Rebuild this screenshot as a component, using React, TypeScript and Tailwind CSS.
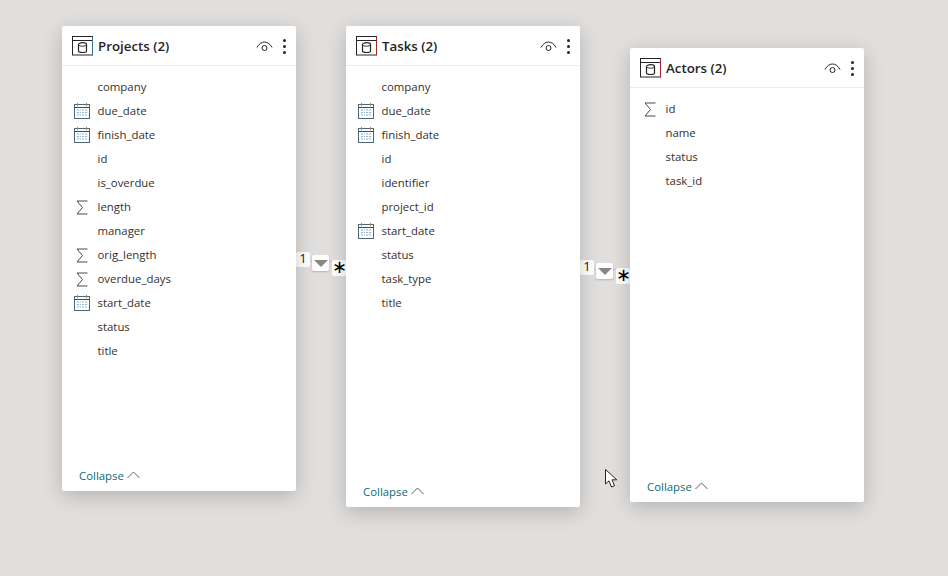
const font = "[font-family:'Open_Sans','Noto_Sans',sans-serif]";

type FieldKind = "none" | "date" | "sum";
type Field = [string, FieldKind];

const projectFields: Field[] = [
  ["company", "none"],
  ["due_date", "date"],
  ["finish_date", "date"],
  ["id", "none"],
  ["is_overdue", "none"],
  ["length", "sum"],
  ["manager", "none"],
  ["orig_length", "sum"],
  ["overdue_days", "sum"],
  ["start_date", "date"],
  ["status", "none"],
  ["title", "none"],
];

const taskFields: Field[] = [
  ["company", "none"],
  ["due_date", "date"],
  ["finish_date", "date"],
  ["id", "none"],
  ["identifier", "none"],
  ["project_id", "none"],
  ["start_date", "date"],
  ["status", "none"],
  ["task_type", "none"],
  ["title", "none"],
];

const actorFields: Field[] = [
  ["id", "sum"],
  ["name", "none"],
  ["status", "none"],
  ["task_id", "none"],
];

const TableIcon = ({ accent }: { accent: string }) => (
  <svg width="21" height="20" viewBox="0 0 21 20" fill="none">
    <rect x="0.5" y="0.5" width="20" height="18.500" stroke="#252423" />
    <path d="M0.500 4.500H20.500" stroke="#252423" />
    <path d="M20.500 1V19" stroke={accent} />
    <path
      d="M6.500 8.500c0-1.100 1.700-1.800 4-1.800s4 .7 4 1.800v6.500c0 1-1.700 1.500-4 1.500s-4-.5-4-1.500V8.500z"
      stroke="#252423"
      strokeWidth="1.200"
    />
    <path d="M6.500 9c.8.800 2.300 1.200 4 1.200s3.200-.4 4-1.200" stroke="#252423" />
  </svg>
);

const CalendarIcon = () => (
  <svg width="16" height="16" viewBox="0 0 16 16" fill="none">
    <rect x="0.500" y="1.500" width="15" height="14" stroke="#4d6678" />
    <path d="M0.500 4.500H15.500" stroke="#3f4a54" />
    <path d="M3.500 0V3M12.500 0V3" stroke="#b08a50" />
    <path
      d="M3 7h2M6 7h1M8 7h2M11 7h2M3 9.500h2M6 9.500h1M8 9.500h2M11 9.500h2M3 12h2M6 12h1M8 12h2M11 12h2"
      stroke="#8fb4d0"
    />
  </svg>
);

const SumIcon = () => (
  <svg width="12" height="15" viewBox="0 0 12 15" fill="none">
    <path d="M11.500 1H1L6.500 7.500L1 14H11.500" stroke="#3f4a54" />
  </svg>
);

const EyeIcon = () => (
  <svg width="17" height="11" viewBox="0 0 17 11" fill="none">
    <path d="M1 6.500C2.800 3 5.500 1 8.500 1S14.200 3 16 6.500" stroke="#252423" />
    <circle cx="8.500" cy="7" r="2.500" stroke="#252423" />
  </svg>
);

const TableCard = ({
  name,
  fields,
  accent,
  className,
}: {
  name: string;
  fields: Field[];
  accent: string;
  className: string;
}) => (
  <div
    className={`absolute flex w-[234px] flex-col rounded-[2px] bg-white shadow-[0_5px_20px_rgba(0,0,0,0.2)] ${className}`}
  >
    <div className="flex h-10 shrink-0 items-center border-b border-[#edebe9] pl-[10px] pr-[10px] pt-[1px]">
      <TableIcon accent={accent} />
      <span className="ml-[5px] mt-[1px] text-[13.300px] font-semibold text-[#252423]">{name}</span>
      <div className="ml-auto flex items-center gap-[10px]">
        <EyeIcon />
        <div className="flex flex-col gap-[3px]">
          <span className="h-[3px] w-[3px] rounded-full bg-[#252423]" />
          <span className="h-[3px] w-[3px] rounded-full bg-[#252423]" />
          <span className="h-[3px] w-[3px] rounded-full bg-[#252423]" />
        </div>
      </div>
    </div>
    <div className="flex flex-col pt-[9px]">
      {fields.map(([label, kind]) => (
        <div key={label} className="flex h-6 items-center">
          <div className="flex w-9 shrink-0 justify-center pl-[4px]">
            {kind === "date" && <CalendarIcon />}
            {kind === "sum" && <SumIcon />}
          </div>
          <span className="ml-[-0.5px] text-[11.400px] text-[#323130]">{label}</span>
        </div>
      ))}
    </div>
    <div className="mt-auto flex h-[24px] items-start pl-[17px] text-[11.400px] text-[#0b6a78]">
      Collapse
      <svg className="ml-[3px] mt-[4px]" width="13" height="8" viewBox="0 0 13 8" fill="none">
        <path d="M0.500 7L6.500 1L12.500 7" stroke="#605e5c" />
      </svg>
    </div>
  </div>
);

const Relation = ({ className }: { className: string }) => (
  <div className={`absolute h-[26px] w-[50px] ${className}`}>
    <div className="absolute left-0 top-[9px] h-px w-full bg-[#c8c6c4]" />
    <div className="absolute left-0 top-0 flex h-[15px] w-[14px] items-center justify-center rounded-[2px] bg-white pb-[1px] text-[13px] text-[#252423]">
      1
    </div>
    <div className="absolute left-[16px] top-[3px] flex h-[16px] w-[17px] items-center justify-center rounded-[2px] bg-white shadow-[0_1px_2px_rgba(0,0,0,0.2)]">
      <div className="h-0 w-0 border-x-[7px] border-t-[7px] border-x-transparent border-t-[#8a8886]" />
    </div>
    <div className="absolute left-[36px] top-[8px] flex h-[16px] w-[14px] items-center justify-center rounded-[2px] bg-white pb-[3px] pl-[1px] text-[18px] leading-none text-black [font-family:'DejaVu_Sans',sans-serif]">
      ∗
    </div>
  </div>
);

const Cursor = () => (
  <svg className="absolute left-[604px] top-[468px]" width="15" height="21" viewBox="0 0 15 21" fill="none">
    <path
      d="M1.500 1.500V16L5 12.800L7.500 19L10.500 17.700L8 11.800H12.800L1.500 1.500Z"
      fill="white"
      stroke="#252423"
    />
  </svg>
);

export default function App() {
  return (
    <div className={`relative h-[576px] w-[948px] overflow-hidden bg-[#e1dfdd] ${font}`}>
      <Relation className="left-[296px] top-[252px]" />
      <Relation className="left-[580px] top-[260px]" />
      <TableCard name="Projects (2)" fields={projectFields} accent="#2f6fb0" className="left-[62px] top-[26px] h-[465px]" />
      <TableCard name="Tasks (2)" fields={taskFields} accent="#a4262c" className="left-[346px] top-[26px] h-[481px]" />
      <TableCard name="Actors (2)" fields={actorFields} accent="#a4262c" className="left-[630px] top-[48px] h-[454px]" />
      <Cursor />
    </div>
  );
}
